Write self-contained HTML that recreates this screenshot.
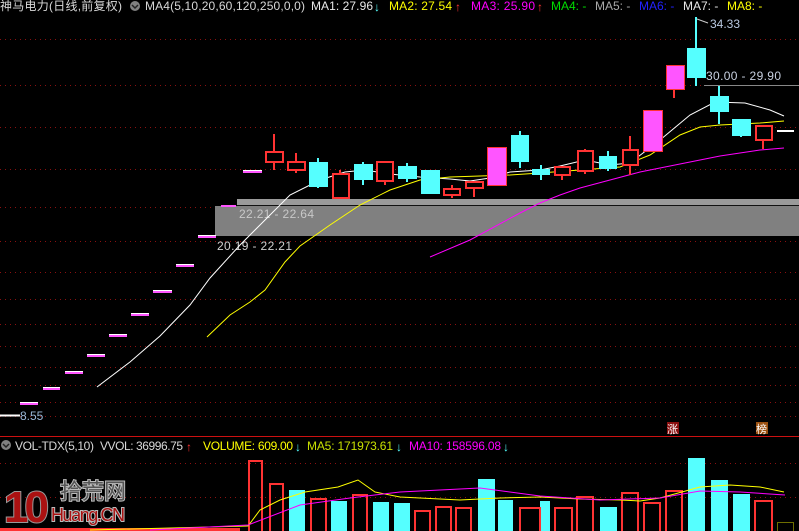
<!DOCTYPE html>
<html><head><meta charset="utf-8"><style>
html,body{margin:0;padding:0;background:#000;width:799px;height:531px;overflow:hidden}
svg{display:block}
text{font-family:"Liberation Sans","Noto Sans CJK SC",sans-serif;font-size:12px}
</style></head><body>
<svg width="799" height="531" viewBox="0 0 799 531" xmlns="http://www.w3.org/2000/svg">
<rect width="799" height="531" fill="#000"/>
<g stroke="#8a1010" stroke-width="1" stroke-dasharray="1,4">
<line x1="0" y1="39.5" x2="799" y2="39.5"/><line x1="0" y1="85.5" x2="799" y2="85.5"/>
<line x1="0" y1="127.5" x2="799" y2="127.5"/><line x1="0" y1="169.5" x2="799" y2="169.5"/>
<line x1="0" y1="207.5" x2="799" y2="207.5"/><line x1="0" y1="241.5" x2="799" y2="241.5"/>
<line x1="0" y1="272.5" x2="799" y2="272.5"/><line x1="0" y1="299.5" x2="799" y2="299.5"/>
<line x1="0" y1="324.5" x2="799" y2="324.5"/><line x1="0" y1="346.5" x2="799" y2="346.5"/>
<line x1="0" y1="367.5" x2="799" y2="367.5"/><line x1="0" y1="385.5" x2="799" y2="385.5"/>
<line x1="0" y1="402.5" x2="799" y2="402.5"/><line x1="0" y1="416.5" x2="799" y2="416.5"/>
<line x1="0" y1="463.5" x2="799" y2="463.5"/><line x1="0" y1="497.5" x2="799" y2="497.5"/>
</g>
<rect x="237" y="199" width="562" height="6" fill="#9a9a9a"/>
<rect x="215" y="206" width="584" height="30" fill="#808080"/>
<line x1="237" y1="205.5" x2="799" y2="205.5" stroke="#111"/>
<text x="239" y="218" fill="#c8c8c8" textLength="75">22.21 - 22.64</text>
<text x="217" y="250" fill="#d0d0d0" textLength="75">20.19 - 22.21</text>
<g stroke-width="2">
<g stroke="#ff55ff">
<line x1="20" y1="404" x2="38" y2="404"/><line x1="43" y1="389" x2="60" y2="389"/><line x1="65" y1="373" x2="83" y2="373"/><line x1="87" y1="356" x2="105" y2="356"/><line x1="109" y1="336" x2="127" y2="336"/><line x1="131" y1="315" x2="149" y2="315"/><line x1="153" y1="292" x2="172" y2="292"/><line x1="176" y1="266" x2="194" y2="266"/><line x1="198" y1="237" x2="216" y2="237"/><line x1="221" y1="206" x2="236" y2="206"/><line x1="243" y1="172" x2="262" y2="172"/>
</g>
<g stroke="#fff" stroke-width="1">
<line x1="20" y1="402.5" x2="38" y2="402.5"/><line x1="43" y1="387.5" x2="60" y2="387.5"/><line x1="65" y1="371.5" x2="83" y2="371.5"/><line x1="87" y1="354.5" x2="105" y2="354.5"/><line x1="109" y1="334.5" x2="127" y2="334.5"/><line x1="131" y1="313.5" x2="149" y2="313.5"/><line x1="153" y1="290.5" x2="172" y2="290.5"/><line x1="176" y1="264.5" x2="194" y2="264.5"/><line x1="198" y1="235.5" x2="216" y2="235.5"/><line x1="243" y1="170.5" x2="262" y2="170.5"/>
</g></g>
<line x1="0" y1="415.5" x2="20" y2="415.5" stroke="#fff" stroke-width="2"/>
<text x="20" y="420" fill="#9ab8d8">8.55</text>
<polyline fill="none" stroke="#fff" stroke-width="1" points="97,387 130,362 160,336 190,305 210,278 240,245 260,225 290,195 320,180 345,172 365,170 390,174 420,177 450,179 470,181 490,178 510,172 540,170 560,166 585,160 610,165 630,163 660,140 690,115 715,102 745,103 770,110 784,116"/>
<polyline fill="none" stroke="#ffff00" stroke-width="1" points="207,337 230,315 250,302 265,290 285,262 300,246 330,225 360,205 390,190 420,180 450,177 480,176 510,175 540,173 580,170 620,167 650,155 680,135 700,127 720,125 760,123 784,121"/>
<polyline fill="none" stroke="#ff00ff" stroke-width="1" points="430,257 470,240 520,213 540,203 560,195 580,188 610,180 640,172 680,164 720,156 760,150 784,148"/>
<g stroke="#ff3333" stroke-width="2" fill="#000">
<line x1="274" y1="134" x2="274" y2="170"/><rect x="266" y="152" width="17" height="10"/>
<line x1="296" y1="153" x2="296" y2="173"/><rect x="288" y="162" width="17" height="8"/>
<line x1="340" y1="170" x2="340" y2="174"/><rect x="333" y="174" width="16" height="24"/>
<line x1="385" y1="181" x2="385" y2="185"/><rect x="377" y="162" width="16" height="19"/>
<line x1="452" y1="185" x2="452" y2="198"/><rect x="444" y="189" width="16" height="6"/>
<line x1="474" y1="188" x2="474" y2="197"/><rect x="466" y="182" width="17" height="6"/>
<line x1="562" y1="175" x2="562" y2="180"/><rect x="555" y="167" width="15" height="8"/>
<line x1="585" y1="149" x2="585" y2="174"/><rect x="578" y="151" width="15" height="20"/>
<line x1="630" y1="136" x2="630" y2="175"/><rect x="623" y="150" width="15" height="15"/>
<line x1="763" y1="140" x2="763" y2="149"/><rect x="756" y="126" width="16" height="14"/>
<line x1="674" y1="89" x2="674" y2="98"/>
</g>
<g stroke="#55ffff" stroke-width="2" fill="#55ffff">
<line x1="318" y1="158" x2="318" y2="188"/><rect x="310" y="163" width="17" height="23"/>
<line x1="363" y1="162" x2="363" y2="185"/><rect x="355" y="165" width="17" height="14"/>
<line x1="407" y1="163" x2="407" y2="182"/><rect x="399" y="167" width="17" height="11"/>
<line x1="430" y1="171" x2="430" y2="194"/><rect x="422" y="171" width="17" height="22"/>
<line x1="520" y1="131" x2="520" y2="168"/><rect x="512" y="136" width="16" height="25"/>
<line x1="541" y1="165" x2="541" y2="180"/><rect x="533" y="170" width="16" height="4"/>
<line x1="608" y1="151" x2="608" y2="171"/><rect x="600" y="157" width="16" height="11"/>
<line x1="696" y1="17" x2="696" y2="86"/><rect x="688" y="49" width="17" height="28"/>
<line x1="719" y1="86" x2="719" y2="124"/><rect x="711" y="97" width="17" height="14"/>
<line x1="741" y1="120" x2="741" y2="137"/><rect x="733" y="120" width="17" height="15"/>
</g>
<g fill="#ff55ff" stroke="#ff3333" stroke-width="1">
<rect x="487.5" y="147.5" width="19" height="38"/>
<rect x="643.5" y="110.5" width="19" height="41"/>
<rect x="666.5" y="65.5" width="18" height="24"/>
</g>
<line x1="777" y1="131" x2="794" y2="131" stroke="#fff" stroke-width="2"/>
<line x1="697" y1="19" x2="708" y2="23" stroke="#ccc"/>
<text x="710" y="28" fill="#b8c8e0">34.33</text>
<text x="706" y="80" fill="#c8d0e0" textLength="75">30.00 - 29.90</text>
<line x1="704" y1="85.5" x2="799" y2="85.5" stroke="#888"/>
<text x="0" y="10" fill="#d8d8d8" textLength="122">神马电力(日线,前复权)</text>
<circle cx="135" cy="6" r="5" fill="#808080"/><path d="M132 5l3 3 3-3" stroke="#222" stroke-width="1.5" fill="none"/>
<text x="145" y="10" fill="#d8d8d8" textLength="160">MA4(5,10,20,60,120,250,0,0)</text>
<text x="311" y="10" fill="#e8e8e8" textLength="62">MA1: 27.96</text><text x="374" y="11" fill="#55ffff">↓</text>
<text x="389" y="10" fill="#ffff00" textLength="63">MA2: 27.54</text><text x="455" y="11" fill="#ff3333">↑</text>
<text x="471" y="10" fill="#ff00ff" textLength="64">MA3: 25.90</text><text x="537" y="11" fill="#ff3333">↑</text>
<text x="551" y="10" fill="#00dd00">MA4: -</text>
<text x="595" y="10" fill="#aaaaaa">MA5: -</text>
<text x="639" y="10" fill="#2222ff">MA6: -</text>
<text x="683" y="10" fill="#e8e8e8">MA7: -</text>
<text x="727" y="10" fill="#ffff00">MA8: -</text>
<rect x="667" y="422" width="12" height="12" fill="#8a1010"/><text x="667" y="433" fill="#fff" style="font-size:11px">涨</text>
<rect x="756" y="422" width="12" height="12" fill="#9a5010"/><text x="756" y="433" fill="#fff" style="font-size:11px">榜</text>
<line x1="0" y1="436.5" x2="799" y2="436.5" stroke="#cc1111"/>
<circle cx="6" cy="445" r="5" fill="#808080"/><path d="M3 444l3 3 3-3" stroke="#222" stroke-width="1.5" fill="none"/>
<text x="15" y="450" fill="#d8d8d8" textLength="79">VOL-TDX(5,10)</text>
<text x="100" y="450" fill="#d8d8d8" textLength="83">VVOL: 36996.75</text><text x="186" y="451" fill="#ff3333">↑</text>
<text x="203" y="450" fill="#ffff00" textLength="90">VOLUME: 609.00</text><text x="295" y="451" fill="#55ffff">↓</text>
<text x="307" y="450" fill="#c8e000" textLength="86">MA5: 171973.61</text><text x="396" y="451" fill="#55ffff">↓</text>
<text x="409" y="450" fill="#ff00ff" textLength="92">MA10: 158596.08</text><text x="503" y="451" fill="#55ffff">↓</text>
<g fill="#55ffff">
<rect x="289" y="490" width="16" height="41"/><rect x="331" y="501" width="16" height="30"/><rect x="373" y="502" width="16" height="29"/><rect x="394" y="503" width="16" height="28"/><rect x="478" y="479" width="17" height="52"/><rect x="498" y="500" width="15" height="31"/><rect x="540" y="501" width="10" height="30"/><rect x="600" y="507" width="17" height="24"/><rect x="688" y="458" width="17" height="73"/><rect x="711" y="480" width="17" height="51"/><rect x="733" y="494" width="17" height="37"/>
</g>
<g fill="none" stroke="#ff3333" stroke-width="2">
<rect x="249" y="461" width="13" height="72"/><rect x="270" y="484" width="13" height="49"/><rect x="311" y="499" width="15" height="34"/><rect x="353" y="495" width="14" height="38"/><rect x="415" y="511" width="15" height="22"/><rect x="436" y="507" width="15" height="26"/><rect x="456" y="508" width="15" height="25"/><rect x="520" y="508" width="20" height="25"/><rect x="555" y="508" width="17" height="25"/><rect x="577" y="497" width="16" height="36"/><rect x="622" y="493" width="16" height="40"/><rect x="644" y="503" width="16" height="30"/><rect x="666" y="491" width="16" height="42"/><rect x="755" y="501" width="17" height="32"/>
</g>
<rect x="777.5" y="522.5" width="16" height="10" fill="none" stroke="#dddd00" stroke-dasharray="1,1"/>
<g fill="#ff3333"><rect x="0" y="528" width="240" height="3"/></g>
<polyline fill="none" stroke="#ffff00" points="90,530 248,526 260,510 280,500 305,492 338,487 358,480 375,492 400,497 460,500 500,498 540,497 580,499 620,500 640,501 660,498 700,487 730,485 760,487 784,492"/>
<polyline fill="none" stroke="#ff00ff" points="150,530 248,525 300,505 350,498 400,492 480,488 540,496 600,500 660,498 700,491 740,492 785,495"/>
<g>
<text x="4" y="522" fill="#aa1111" stroke="#999" stroke-width="2" paint-order="stroke" style="font-size:44px;font-weight:bold;letter-spacing:-4px">10</text>
<text x="60" y="499" fill="#555" stroke="#bbb" stroke-width="2" paint-order="stroke" style="font-size:22px">拾荒网</text>
<text x="51" y="521" fill="#aa1111" stroke="#bbb" stroke-width="2" paint-order="stroke" style="font-size:18px" textLength="74">Huang.CN</text>
</g>
</svg>
</body></html>
